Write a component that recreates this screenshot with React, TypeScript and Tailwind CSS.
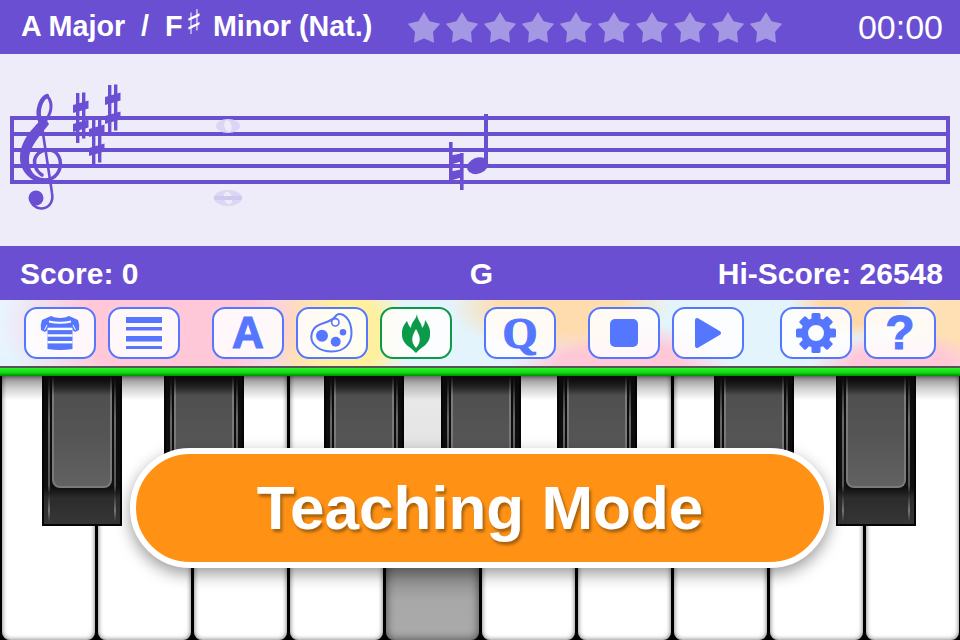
import type { ReactNode } from "react"

const blue = "#5577ff"
const purple = "#6a4fd2"
const heavyGlyph = "[-webkit-text-stroke:1.2px_#5577ff]"

function Star() {
  return (
    <svg width="34" height="32" viewBox="0 0 34 32" className="shrink-0">
      <polygon
        points="17,1 22.6,10.3 33.2,12.7 26,20.9 27,31.8 17,27.5 7,31.8 8,20.9 0.8,12.7 11.4,10.3"
        fill="#a497e4"
      />
    </svg>
  )
}

function Sharp({ dx, dy }: { dx: number; dy: number }) {
  return (
    <g transform={`translate(${dx} ${dy})`} fill={purple}>
      <rect x="76" y="93" width="3.4" height="50" />
      <rect x="82" y="92.5" width="3.4" height="46" />
      <polygon points="73,105 88.5,100.5 88.5,108.5 73,113" />
      <polygon points="73,124 88.5,119.5 88.5,127.5 73,132" />
    </g>
  )
}

function Staff() {
  return (
    <svg viewBox="0 54 960 192" className="block h-[192px] w-[960px]">
      <rect x="10" y="116" width="4" height="68" fill={purple} />
      <rect x="946" y="116" width="4" height="68" fill={purple} />
      {[116, 132, 148, 164, 180].map((y) => (
        <rect key={y} x="10" y={y} width="940" height="4" fill={purple} />
      ))}

      {/* ghost notes */}
      <ellipse cx="228" cy="126" rx="12" ry="7" fill="#dcd6f5" />
      <ellipse cx="228" cy="126" rx="3.5" ry="6" fill="#efecfa" transform="rotate(-15 228 126)" />
      <ellipse cx="228" cy="198" rx="14" ry="8" fill="#dcd6f5" />
      <ellipse cx="228" cy="198" rx="4" ry="6.5" fill="#efecfa" transform="rotate(-15 228 198)" />
      <rect x="214" y="196" width="28" height="4" fill="#cfc8f0" />

      {/* treble clef */}
      <path
        d="M44 116 C36 126 20 138 20 158 C20 172 32 183 44 182 L44 178 C34 178 29 170 29 160 C29 146 42 134 49 124 Z"
        fill={purple}
      />
      <g fill="none" stroke={purple} strokeLinecap="round">
        <path d="M41 123 C35 110 42 98 47 96" strokeWidth="4.5" />
        <path d="M47 96 C53 102 52 112 46 120" strokeWidth="3" />
        <path d="M44 180 C56 180 62 170 60 160 C58 152 52 149 46 150 C38 151 33 158 35 165 C36 170 39 173 42 175" strokeWidth="3.5" />
        <path d="M41 120 L52 193 C54 204 47 208.5 41 208.5 C36 208.5 31 204 31 200" strokeWidth="2.6" />
      </g>
      <circle cx="36" cy="198" r="7.5" fill={purple} />

      <Sharp dx={0} dy={0} />
      <Sharp dx={16} dy={24} />
      <Sharp dx={32} dy={-8} />

      {/* natural + note */}
      <rect x="449" y="142" width="3.6" height="36" fill={purple} />
      <rect x="460" y="153" width="3.6" height="37" fill={purple} />
      <polygon points="449,156 463,153 463,161 449,165" fill={purple} />
      <polygon points="449,172 463,169 463,177 449,181" fill={purple} />
      <ellipse cx="477.7" cy="165.7" rx="11" ry="8" fill={purple} transform="rotate(-22 477.7 165.7)" />
      <rect x="484" y="114" width="4" height="52" fill={purple} />
    </svg>
  )
}

function ToolButton({ children, green }: { children: ReactNode; green?: boolean }) {
  return (
    <div
      className={`flex h-[52px] w-[72px] shrink-0 items-center justify-center rounded-[13px] border-2 bg-white/85 ${
        green ? "border-[#0a9a4a]" : "border-[#5577ff]"
      }`}
    >
      {children}
    </div>
  )
}

function Shirt() {
  return (
    <svg width="40" height="36" viewBox="0 0 40 36">
      <path
        d="M11 1 C16 3.5 24 3.5 29 1 L38 5 Q40 10 39 15 L35 17 L32.5 15 L32.5 34 Q20 36 7.5 34 L7.5 15 L5 17 L1 15 Q0 10 2 5 Z"
        fill={blue}
      />
      <path d="M9 6.5 Q20 9 31 6.5" fill="none" stroke="#fff" strokeWidth="2" />
      <rect x="7.5" y="12.7" width="25" height="2.4" fill="#fff" />
      <rect x="7.5" y="19.3" width="25" height="2.4" fill="#fff" />
      <rect x="7.5" y="26" width="25" height="2.4" fill="#fff" />
      <path d="M7 10 L4.5 15" stroke="#fff" strokeWidth="1" />
      <path d="M33 10 L35.5 15" stroke="#fff" strokeWidth="1" />
    </svg>
  )
}

function Lines() {
  return (
    <svg width="36" height="32" viewBox="0 0 36 32" fill={blue}>
      <rect x="0" y="0" width="36" height="6" />
      <rect x="0" y="10" width="36" height="3.5" />
      <rect x="0" y="19" width="36" height="5.5" />
      <rect x="0" y="29" width="36" height="3" />
    </svg>
  )
}

function Palette() {
  return (
    <svg width="44" height="40" viewBox="312 314 44 40">
      <path
        d="M337 318 C330 326 316 322 313.5 336 C312 346 322 352.5 334 352.5 C346 352.5 353.5 345 353.5 334 C353.5 328 352 322 348 318 C344 314 339 314 337 318 Z"
        fill="none"
        stroke={blue}
        strokeWidth="2"
      />
      <circle cx="337.3" cy="323.3" r="3.7" fill="#fff" stroke={blue} strokeWidth="1.6" />
      <circle cx="324" cy="336.7" r="6" fill={blue} />
      <circle cx="337.7" cy="342.7" r="5" fill={blue} />
      <circle cx="345" cy="333.3" r="3.3" fill={blue} />
    </svg>
  )
}

function Flame() {
  return (
    <svg width="28" height="39" viewBox="0 0 28 39">
      <path
        d="M15 0 C15 6 20 9 20 14 C22 12 23 9 23 6 C27 11 29 17 28 22 C27 31 19 33 14 39 C9 33 1 31 0 22 C-1 16 2 10 5 7 C6 10 7 12 9 14 C9 8 14 6 15 0 Z"
        fill="#0a9a4a"
      />
      <path d="M14 15 C10 22 8 27 14 34 C20 27 18 22 14 15 Z" fill="#fff" />
    </svg>
  )
}

function Stop() {
  return <div className="h-7 w-7 rounded-[5px] bg-[#5577ff]" />
}

function Play() {
  return (
    <svg width="28" height="32" viewBox="0 0 28 32">
      <path d="M3 3 L25 16 L3 29 Z" fill={blue} stroke={blue} strokeWidth="4" strokeLinejoin="round" />
    </svg>
  )
}

function Gear() {
  return (
    <svg width="40" height="40" viewBox="-20 -20 40 40">
      {[0, 45, 90, 135, 180, 225, 270, 315].map((a) => (
        <rect key={a} x="-4.5" y="-20" width="9" height="10" rx="1.5" fill={blue} transform={`rotate(${a})`} />
      ))}
      <circle r="11.5" fill="none" stroke={blue} strokeWidth="7" />
    </svg>
  )
}

function WhiteKey({ pressed }: { pressed?: boolean }) {
  return (
    <div className="h-full w-24 bg-black px-[1.5px]">
      <div
        className={`h-full w-full rounded-b-lg ${
          pressed
            ? "bg-[linear-gradient(to_bottom,#9a9a9a_0px,#e8e8e8_24px,#e4e4e4_72px,#8a8a8a_192px,#a8a8a8_225px,#aaaaaa_100%)] shadow-[inset_0_0_10px_rgba(0,0,0,0.6)]"
            : "bg-[linear-gradient(to_bottom,#8a8a8a_0px,#cfcfcf_12px,#ffffff_24px,#ffffff_100%)] shadow-[inset_0_0_5px_rgba(0,0,0,0.6)]"
        }`}
      />
    </div>
  )
}

function BlackKey({ left }: { left: string }) {
  return (
    <div className={`absolute top-0 h-[150px] w-20 bg-[#050505] px-[2px] pb-[2px] ${left}`}>
      <div className="relative h-full w-full overflow-hidden bg-[linear-gradient(to_bottom,#0a0a0a_0px,#101010_112px,#2c2c2c_122px,#353535_146px)]">
        <div className="absolute left-[4px] top-0 h-[146px] w-[2px] bg-[linear-gradient(to_bottom,#222,#6a6a6a_30%,#555_75%,#222_80%,#777_92%,#333_100%)] blur-[0.5px]" />
        <div className="absolute right-[4px] top-0 h-[146px] w-[2px] bg-[linear-gradient(to_bottom,#222,#6a6a6a_30%,#555_75%,#222_80%,#777_92%,#333_100%)] blur-[0.5px]" />
        <div className="absolute inset-x-2 top-0 h-[112px] rounded-b-lg border-x-2 border-b-2 border-[#7a7a7a] bg-[#565656] bg-[linear-gradient(to_bottom,#151515_0px,#4f4f4f_18px,#555555_60px,#626262_112px)] blur-[0.4px]" />
        <div className="absolute inset-x-0 top-0 h-5 bg-[linear-gradient(to_bottom,#0a0a0a,transparent)]" />
      </div>
    </div>
  )
}

export default function App() {
  return (
    <div className="relative flex h-[640px] w-[960px] flex-col overflow-hidden bg-black font-['Liberation_Sans',sans-serif] text-white">
      <div className="flex h-[54px] items-center bg-[#6a4fd2] pl-[21px] pr-[17px]">
        <div className="flex w-[386px] items-center whitespace-pre text-[28.7px] font-bold">
          <span>A Major  /  F</span>
          <span className="relative -top-[5px] mx-[3px] font-['DejaVu_Sans',sans-serif] text-[34px] font-normal leading-none">♯</span>
          <span> Minor (Nat.)</span>
        </div>
        <div className="flex gap-1">
          {Array.from({ length: 10 }).map((_, i) => (
            <Star key={i} />
          ))}
        </div>
        <div className="ml-auto text-[34px]">00:00</div>
      </div>

      <div className="h-[192px] bg-[#efecfa]">
        <Staff />
      </div>

      <div className="grid h-[54px] grid-cols-3 items-center bg-[#6a4fd2] pl-5 pr-[17px] text-[30px] font-bold">
        <div>Score: 0</div>
        <div className="text-center">G</div>
        <div className="text-right">Hi-Score: 26548</div>
      </div>

      <div className="flex h-[66px] items-center bg-[#e4f4fc] bg-[radial-gradient(ellipse_170px_90px_at_170px_25px,#ffc8d8_55%,transparent),radial-gradient(ellipse_75px_80px_at_335px_35px,#fff0a0_60%,transparent),radial-gradient(ellipse_110px_50px_at_560px_5px,#ffdcae_55%,transparent),radial-gradient(ellipse_110px_45px_at_620px_66px,#ffc8d8_55%,transparent),radial-gradient(ellipse_70px_35px_at_860px_5px,#ffd8a8_55%,transparent),radial-gradient(ellipse_90px_35px_at_900px_66px,#ffc8d8_55%,transparent),radial-gradient(ellipse_60px_50px_at_955px_25px,#ffe0b4_55%,transparent),radial-gradient(ellipse_50px_40px_at_0px_20px,#e8f4ff_55%,transparent)] pl-6">
        <ToolButton>
          <Shirt />
        </ToolButton>
        <div className="w-3 shrink-0" />
        <ToolButton>
          <Lines />
        </ToolButton>
        <div className="w-8 shrink-0" />
        <ToolButton>
          <span className={`text-[44px] font-bold leading-none text-[#5577ff] ${heavyGlyph}`}>A</span>
        </ToolButton>
        <div className="w-3 shrink-0" />
        <ToolButton>
          <Palette />
        </ToolButton>
        <div className="w-3 shrink-0" />
        <ToolButton green>
          <Flame />
        </ToolButton>
        <div className="w-8 shrink-0" />
        <ToolButton>
          <span className={`font-['Liberation_Serif',serif] text-[45px] font-bold leading-none text-[#5577ff] ${heavyGlyph}`}>Q</span>
        </ToolButton>
        <div className="w-8 shrink-0" />
        <ToolButton>
          <Stop />
        </ToolButton>
        <div className="w-3 shrink-0" />
        <ToolButton>
          <Play />
        </ToolButton>
        <div className="w-9 shrink-0" />
        <ToolButton>
          <Gear />
        </ToolButton>
        <div className="w-3 shrink-0" />
        <ToolButton>
          <span className={`text-[48px] font-bold leading-none text-[#5577ff] ${heavyGlyph}`}>?</span>
        </ToolButton>
      </div>

      <div className="h-[2px] bg-[#555555]" />
      <div className="h-2 bg-[linear-gradient(to_bottom,#2bef2b,#11dd11_55%,#008800)]" />

      <div className="relative flex h-[264px]">
        {Array.from({ length: 10 }).map((_, i) => (
          <WhiteKey key={i} pressed={i === 4} />
        ))}
        <BlackKey left="left-[42px]" />
        <BlackKey left="left-[164px]" />
        <BlackKey left="left-[324px]" />
        <BlackKey left="left-[441px]" />
        <BlackKey left="left-[557px]" />
        <BlackKey left="left-[714px]" />
        <BlackKey left="left-[836px]" />
      </div>

      <div className="absolute left-[130px] top-[448px] flex h-[120px] w-[700px] items-center justify-center rounded-[60px] border-[6px] border-white bg-[#ff9214] pb-[2px] text-[62px] font-bold shadow-[0_6px_16px_rgba(0,0,0,0.4)] [text-shadow:2px_3px_3px_rgba(0,0,0,0.35)]">
        Teaching Mode
      </div>
    </div>
  )
}
